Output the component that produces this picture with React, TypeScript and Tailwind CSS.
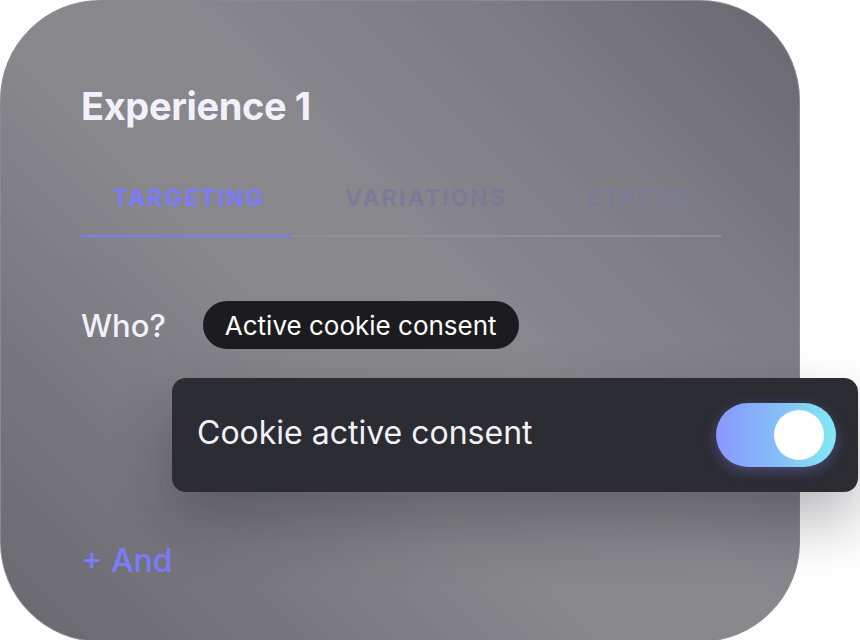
import React from 'react';

const tabs = ['TARGETING', 'VARIATIONS', 'STATUS'];

const Toggle = ({ on }: { on: boolean }) => (
    <div className="w-[120px] h-[64px] rounded-full flex items-center justify-end pr-3 bg-[linear-gradient(90deg,#8a98ff_0%,#84c0f6_55%,#82eaf1_100%)] shadow-[0_4px_14px_rgba(130,130,255,0.35)]">
        {on && <div className="w-[50px] h-[50px] rounded-full bg-white" />}
    </div>
);

function App() {
    return (
        <div className="relative w-[860px] h-[640px] bg-white overflow-hidden font-['Inter',sans-serif]">
            <div className="w-[800px] h-[642px] rounded-[100px] bg-[linear-gradient(225deg,#68676f_0%,#7d7c83_22%,#89888d_45%,#87868b_60%,#77767c_80%,#69686e_100%)] border border-[#8b8a90] px-20 pt-[86px]">
                <h1 className="text-[38px] leading-none font-bold text-[#f2f0fb] tracking-[-0.01em]">Experience 1</h1>

                {/* tabs */}
                <div className="mt-[62px] flex gap-[80px] pl-8 text-[23px] leading-none font-bold tracking-[0.09em]">
                    {tabs.map((t, i) => (
                        <span key={t} className={i === 0 ? 'text-[#7b7bff]' : 'text-[#7b7a98]'}>{t}</span>
                    ))}
                </div>
                <div className="mt-[25px] h-[2px] w-[640px] bg-[#908f95] flex">
                    <div className="w-[212px] h-full bg-[#7b7bff]" />
                </div>

                <div className="mt-[64px] flex items-center gap-[37px]">
                    <span className="text-[31px] leading-none font-medium text-[#f2f0fb]">Who?</span>
                    <span className="h-[48px] px-[22px] rounded-full bg-[#1c1b20] text-white text-[26px] flex items-center">Active cookie consent</span>
                </div>

                <div className="mt-[196px] text-[32px] leading-none font-medium text-[#7b7bff]">+ And</div>
            </div>

            {/* floating option */}
            <div className="absolute left-[172px] top-[378px] w-[686px] h-[114px] rounded-[14px] bg-[#2c2c33] shadow-[0_30px_60px_rgba(20,20,30,0.3)] flex items-center justify-between pl-[25px] pr-[22px]">
                <span className="text-[32px] text-[#f2f1f8] -mt-[4px]">Cookie active consent</span>
                <Toggle on />
            </div>
        </div>
    );
}

export default App;
